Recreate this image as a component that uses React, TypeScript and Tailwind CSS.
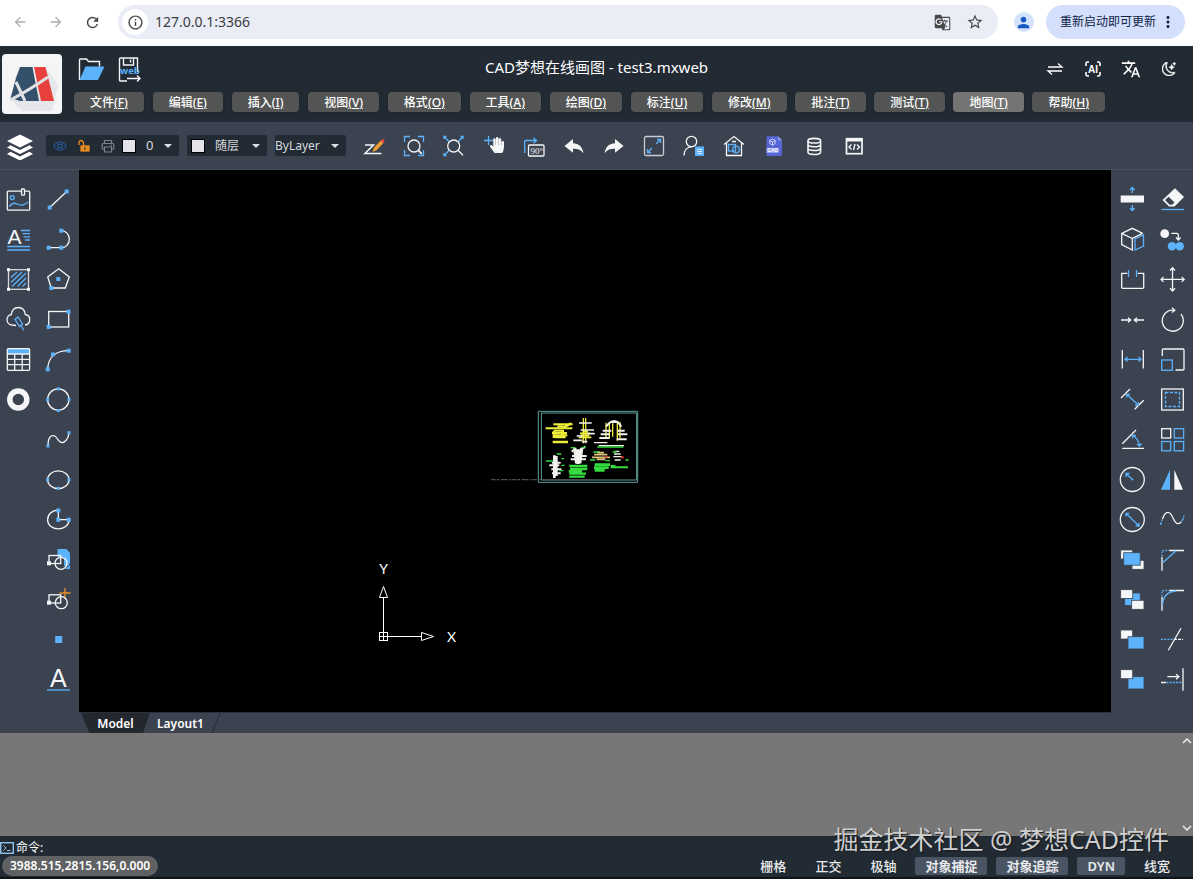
import React from 'react';
import {
  MdArrowBack,
  MdArrowForward,
  MdGTranslate,
  MdInfoOutline,
  MdMoreVert,
  MdPerson,
  MdRefresh,
  MdStarBorder,
  MdTranslate,
} from 'react-icons/md';
import { FaHandPaper } from 'react-icons/fa';
import { BsMoonStars } from 'react-icons/bs';

const BLUE = '#5cb3fb';
const WHITE = '#f4f6f8';
const PANEL = '#3c4350';

const menus = [
  { label: '文件', hotkey: 'F' },
  { label: '编辑', hotkey: 'E' },
  { label: '插入', hotkey: 'I' },
  { label: '视图', hotkey: 'V' },
  { label: '格式', hotkey: 'O' },
  { label: '工具', hotkey: 'A' },
  { label: '绘图', hotkey: 'D' },
  { label: '标注', hotkey: 'U' },
  { label: '修改', hotkey: 'M' },
  { label: '批注', hotkey: 'T' },
  { label: '测试', hotkey: 'T' },
  { label: '地图', hotkey: 'T', active: true },
  { label: '帮助', hotkey: 'H' },
];

const statusItems = [
  { label: '栅格', on: false },
  { label: '正交', on: false },
  { label: '极轴', on: false },
  { label: '对象捕捉', on: true },
  { label: '对象追踪', on: true },
  { label: 'DYN', on: true },
  { label: '线宽', on: false },
];

type Tool = { name: string; art: React.ReactNode };

function Icon({ children }: { children: React.ReactNode }) {
  return (
    <svg
      viewBox="0 0 24 24"
      className="size-6 shrink-0 overflow-visible"
      fill="none"
      stroke={WHITE}
      strokeWidth="1.3"
      aria-hidden="true"
    >
      {children}
    </svg>
  );
}

// small grip squares shown on the geometry icons
function Grips({ at, color = BLUE, size = 4 }: { at: number[][]; color?: string; size?: number }) {
  return (
    <g fill={color} stroke="none">
      {at.map(([x, y]) => (
        <rect key={`${x}-${y}`} x={x - size / 2} y={y - size / 2} width={size} height={size} />
      ))}
    </g>
  );
}

const drawTools: Tool[] = [
  {
    name: '图片',
    art: (
      <>
        <path d="M15.5 3.2H2.3a1 1 0 0 0-1 1v17a1 1 0 0 0 1 1h20.4a1 1 0 0 0 1-1v-17a1 1 0 0 0-1-1h-4" />
        <rect x="15.5" y="1" width="3" height="6.2" rx="0.8" />
        <g stroke={BLUE}>
          <circle cx="6.3" cy="9.6" r="2" />
          <path d="M3.3 18.5c2.5-3.5 5-4 8-2.5s8 2 11-2.500" />
        </g>
      </>
    ),
  },
  {
    name: '直线',
    art: (
      <>
        <path d="M4 19.3 20.7 3.5" />
        <Grips at={[[3.7, 19.5], [20.7, 3.5]]} />
      </>
    ),
  },
  {
    name: '多行文字',
    art: (
      <>
        <text x="1.5" y="16" fontSize="21" fontWeight="400" fill={WHITE} stroke="none" fontFamily="Liberation Sans, sans-serif">A</text>
        <path stroke={BLUE} d="M15 2.500h9M16.500 5.700H24M17.500 8.900H24M19 12h5M1.300 18.500H24M1.300 22H24" />
      </>
    ),
  },
  {
    name: '多段线',
    art: (
      <>
        <path d="M15.3 2.7c4.5 0 8 3.500 8 8.500s-3.500 8.500-8 8.500H2.700" />
        <Grips at={[[15.3, 2.7], [15.3, 19.7], [2.7, 19.7]]} />
      </>
    ),
  },
  {
    name: '填充',
    art: (
      <>
        <rect x="2.5" y="1.7" width="20" height="19.6" stroke="#d5d8dd" />
        <path stroke={BLUE} d="M5 9.500 11 4M5 14.500 16 4M6 18.500 20 5M11.500 18.500 20 10M16.500 18.500l3.500-3.500" />
        <Grips color={WHITE} size={3} at={[[2.5, 1.7], [22.5, 1.7], [2.5, 21.3], [22.5, 21.3]]} />
      </>
    ),
  },
  {
    name: '多边形',
    art: (
      <>
        <path d="M12.700.7 23.300 9l-4 11h-14L1.700 9Z" />
        <Grips at={[[12.3, 11], [5.3, 20]]} />
      </>
    ),
  },
  {
    name: '云线',
    art: (
      <>
        <path d="M10 17.500C8 17 7 17 6 17a5.300 5.300 0 0 1-.7-10.500C6 1.500 9-.5 12.300-.5s6.400 2 7 7A5.300 5.300 0 0 1 19 17" />
        <path stroke={BLUE} d="m9 11.500 3-2.500 4.500 7-3 2.500zM15 17.500l3 5" />
      </>
    ),
  },
  {
    name: '矩形',
    art: (
      <>
        <rect x="2.7" y="3.5" width="20" height="15.5" />
        <Grips at={[[22.5, 3.7], [2.7, 18.9]]} />
      </>
    ),
  },
  {
    name: '表格',
    art: (
      <>
        <rect x="1.5" y="0.9" width="22" height="5" fill={BLUE} stroke="none" />
        <rect x="1.3" y="0.7" width="22.3" height="21.6" rx="1" />
        <path d="M1.300 6h22.300M1.300 11.300h22.300M1.300 16.700h22.300M8.700 6v16M16.200 6v16" />
      </>
    ),
  },
  {
    name: '圆弧',
    art: (
      <>
        <path d="M1.700 21.300C2 9 10 2.700 23 2.700" />
        <Grips at={[[1.7, 21.3], [6.9, 6.5], [22.7, 2.7]]} />
      </>
    ),
  },
  { name: '圆环', art: <circle cx="12.3" cy="11.5" r="8.5" strokeWidth="5.5" /> },
  {
    name: '圆',
    art: (
      <>
        <circle cx="12.3" cy="11.5" r="10.7" />
        <Grips size={3} at={[[12.3, 0.8], [12.3, 22.5], [1.6, 11.5], [23, 11.5]]} />
      </>
    ),
  },
  { name: '', art: null },
  {
    name: '样条曲线',
    art: (
      <>
        <path d="M2 18C2 9 5 7.500 7.500 7.700c4 .3 4.500 7 8.500 7 3 0 6.500-4 7-10" />
        <Grips size={3} at={[[2, 18], [23, 4.7]]} />
      </>
    ),
  },
  { name: '', art: null },
  {
    name: '椭圆',
    art: (
      <>
        <ellipse cx="12.3" cy="11.7" rx="10.7" ry="8.9" />
        <Grips size={3} at={[[1.6, 11.7], [23, 11.7], [12.3, 20.3]]} />
      </>
    ),
  },
  { name: '', art: null },
  {
    name: '椭圆弧',
    art: (
      <>
        <path d="M12.300 2.200C6 2.200 1.600 6.500 1.600 11.700S6 20.800 12.300 20.800 23 17 23 11.700H12.300Z" />
        <Grips at={[[12.3, 2.5], [12.3, 11.7], [22.7, 11.7]]} />
      </>
    ),
  },
  { name: '', art: null },
  {
    name: '插入图块',
    art: (
      <>
        <path d="M11.500 1h9l3.500 4v10l-2 3h-4V9h-6.500zM19 21l5-4v4z" fill={BLUE} stroke="none" />
        <rect x="3" y="7.5" width="11.7" height="8" />
        <circle cx="15" cy="15.3" r="6" />
        <Grips color={WHITE} at={[[3, 15.3]]} />
      </>
    ),
  },
  { name: '', art: null },
  {
    name: '创建图块',
    art: (
      <>
        <path d="M19 0v10.500M13.500 5h11" stroke="#e8902a" />
        <rect x="3" y="6.8" width="11.7" height="8.2" />
        <circle cx="15.3" cy="14.7" r="6" />
        <Grips color={WHITE} at={[[3, 14.7]]} />
      </>
    ),
  },
  { name: '', art: null },
  { name: '点', art: <rect x="9.2" y="8" width="7" height="7" fill={BLUE} stroke="none" /> },
  { name: '', art: null },
  {
    name: '单行文字',
    art: (
      <>
        <text x="4" y="18.5" fontSize="25" fill={WHITE} stroke="none" fontFamily="Liberation Sans, sans-serif">A</text>
        <path stroke={BLUE} d="M1 22h23" />
      </>
    ),
  },
];

const modifyTools: Tool[] = [
  {
    name: '打断线',
    art: (
      <>
        <rect x="0.7" y="7.5" width="23.3" height="7" fill={WHITE} stroke="none" />
        <path stroke={BLUE} d="M12.300 5V-.5M10 2l2.300-2.500L14.600 2M12.300 17v5.500M10 20l2.300 2.500 2.300-2.500" />
      </>
    ),
  },
  {
    name: '删除',
    art: (
      <>
        <path d="M15 .3 24 9 14.500 18.500H9L2.500 12Z" fill={WHITE} stroke="none" />
        <path d="M8.700 8.700 14.500 14.500 12 16.800H9.700L5 12Z" fill={PANEL} stroke="none" />
        <path stroke={BLUE} d="M1.500 21.500H24" />
      </>
    ),
  },
  {
    name: '三维',
    art: (
      <>
        <path d="M22.700 5.300 12.300.3 1.700 5.300v11.400L12.300 22V10.500L22.700 5.300M1.700 5.300l10.600 5.200" />
        <path stroke={BLUE} d="m15 11 8.500-4v11L15 22z" />
      </>
    ),
  },
  {
    name: '复制',
    art: (
      <>
        <circle cx="4.7" cy="5.7" r="4.4" fill={WHITE} stroke="none" />
        <path d="M11.300 5.300h5.500q1.500 0 1.500 1.500V12M16 9.500l2.300 2.500 2.300-2.500" />
        <circle cx="12" cy="18.3" r="4.2" fill={BLUE} stroke="none" />
        <circle cx="19.7" cy="18.3" r="4.2" fill={BLUE} stroke="none" />
      </>
    ),
  },
  {
    name: '打断',
    art: (
      <>
        <path d="M7.300 5.300H1.700v14q0 1 1 1h20q1 0 1-1v-14h-6" />
        <path stroke={BLUE} d="M8.500 2v7M16.500 2v7" />
      </>
    ),
  },
  {
    name: '移动',
    art: <path d="M12.500-.3V23M1 11.400h23.200M10 2.500 12.500-.3 15 2.500M10 20.300l2.500 2.700 2.500-2.700M3.500 8.900 1 11.400l2.500 2.500M21.700 8.900l2.500 2.500-2.500 2.500" />,
  },
  {
    name: '合并',
    art: <path d="M1 12h9.500M8 9.700l2.700 2.300L8 14.300M24 12h-9.500M17 9.700 14.300 12l2.700 2.300" />,
  },
  {
    name: '旋转',
    art: (
      <>
        <path d="M14 2.200H12.500a10.500 10.500 0 1 0 8.500 4" />
        <path d="m12-.2 2.800 2.400L12 4.600" />
      </>
    ),
  },
  {
    name: '线性标注',
    art: (
      <>
        <path d="M2.300 2v18.500M23.300 2v18.500" />
        <path stroke={BLUE} d="M5 11.300h16M7.500 9 5 11.300l2.500 2.300M18.500 9l2.500 2.300-2.500 2.300" />
      </>
    ),
  },
  {
    name: '缩放',
    art: (
      <>
        <path d="M2.300 8V2q0-1 1-1H23q1 0 1 1v19q0 1-1 1h-7.500" />
        <rect x="1.7" y="12" width="10.6" height="10.3" stroke={BLUE} />
      </>
    ),
  },
  {
    name: '对齐标注',
    art: (
      <>
        <path d="M1 10l9-9M14.700 21.300l9-9" />
        <path stroke={BLUE} d="M6.700 6.300 18.500 17.300M6.700 9.500V6.300H10M18.500 14v3.300H15" />
      </>
    ),
  },
  {
    name: '偏移',
    art: (
      <>
        <rect x="1.7" y="1" width="21.6" height="21" />
        <rect x="5.5" y="4.5" width="14" height="14" stroke={BLUE} strokeDasharray="3 1.5" />
      </>
    ),
  },
  {
    name: '角度标注',
    art: (
      <>
        <path d="M2.300 20.300H24M2.300 15.700 16 2" />
        <path stroke={BLUE} d="M12.500 7.500q6 3 7 10.500M12.500 10.500v-3h3.500M17 16l2.500 2 2-2.500" />
      </>
    ),
  },
  {
    name: '阵列',
    art: (
      <>
        <rect x="1.7" y="0.7" width="9" height="9.3" />
        <g stroke={BLUE}>
          <rect x="14.3" y="0.7" width="9.3" height="9.3" />
          <rect x="1.7" y="13.5" width="9" height="9.3" />
          <rect x="14.3" y="13.5" width="9.3" height="9.3" />
        </g>
      </>
    ),
  },
  {
    name: '半径标注',
    art: (
      <>
        <circle cx="12.3" cy="11.5" r="12" />
        <path stroke={BLUE} d="M13.300 12.300 6 5.500M6 9V5.500h3.500" />
      </>
    ),
  },
  {
    name: '镜像',
    art: (
      <>
        <path d="M10 1.700v20H1z" fill={BLUE} stroke="none" />
        <path d="M14.300 1.700v20H23z" fill={WHITE} stroke="none" />
      </>
    ),
  },
  {
    name: '直径标注',
    art: (
      <>
        <circle cx="12.3" cy="11.5" r="12" />
        <path stroke={BLUE} d="M6 5.300 19 18M6 8.500V5.300h3.300M19 14.700V18h-3.300" />
      </>
    ),
  },
  {
    name: '拟合',
    art: (
      <>
        <path d="M2.500 11C4 6 6 4.300 8 4.300c5 0 5 11.400 10 11.400 1.500 0 2.500-.7 3.500-2" />
        <path stroke={BLUE} d="M.7 17q.5-3 1.500-5.500M22 13q1.500-2.500 2-5.500" strokeDasharray="3 1" />
      </>
    ),
  },
  {
    name: '置于中间',
    art: (
      <g stroke={PANEL} strokeWidth="0.8">
        <rect x="0.7" y="2" width="12" height="9" fill={WHITE} />
        <rect x="12" y="12.3" width="12" height="9" fill={WHITE} />
        <rect x="3.7" y="4.7" width="16.5" height="12.5" fill={BLUE} />
      </g>
    ),
  },
  {
    name: '倒角',
    art: (
      <>
        <path d="M9.300 2.500H24M2 8.700v14" />
        <path stroke={BLUE} d="M2.700 14.700 16 2.700" />
        <path stroke={BLUE} strokeDasharray="1.5 1.5" d="M2 8V2.500h7" />
      </>
    ),
  },
  {
    name: '中间层',
    art: (
      <g stroke={PANEL} strokeWidth="0.8">
        <rect x="4.7" y="5" width="15.5" height="12.5" fill={BLUE} />
        <rect x="0.7" y="1.7" width="12" height="8.7" fill={WHITE} />
        <rect x="11.7" y="12.3" width="12.3" height="9" fill={WHITE} />
      </g>
    ),
  },
  {
    name: '圆角',
    art: (
      <>
        <path d="M9.300 2.500H24M2 8.700v14" />
        <path stroke={BLUE} d="M2.500 17C3 8 8 3.500 16 3" />
        <path stroke={BLUE} strokeDasharray="1.5 1.5" d="M2 8V2.500h7" />
      </>
    ),
  },
  {
    name: '上移一层',
    art: (
      <g stroke={PANEL} strokeWidth="0.8">
        <rect x="0.7" y="2" width="12" height="9" fill={WHITE} />
        <rect x="8" y="8.7" width="16" height="12.3" fill={BLUE} />
      </g>
    ),
  },
  {
    name: '修剪',
    art: (
      <>
        <path stroke={BLUE} strokeDasharray="2 1.2" d="M1 11.300h13" />
        <path strokeDasharray="3 1" d="M14 11.300h9" />
        <path d="M8.300 22.300 21 .3" />
      </>
    ),
  },
  {
    name: '下移一层',
    art: (
      <g stroke={PANEL} strokeWidth="0.8">
        <rect x="8" y="8.7" width="16" height="12.3" fill={BLUE} />
        <rect x="0.7" y="1.7" width="12" height="9" fill={WHITE} />
      </g>
    ),
  },
  {
    name: '延伸',
    art: (
      <>
        <path d="M7.300 8.700h11.500M16 6.200l3 2.500-3 2.500M23 .3v22.500M1 14.500h5" />
        <path stroke={BLUE} strokeDasharray="2 1.2" d="M6.500 14.500H22" />
      </>
    ),
  },
];

const viewTools: Tool[] = [
  {
    name: '草图',
    art: (
      <>
        <path d="M3 11h8.500L3 19.500h16.500" strokeWidth="1.5" />
        <path d="m10.500 18 1.200-4 7-7.500 2.700 2.500-7 7.500z" fill="#f09a32" stroke="none" />
        <path d="m18.700 6.500 1.300-1.300q1-.7 1.900.2t.5 1.900L21.400 9z" fill="#e0483e" stroke="none" />
      </>
    ),
  },
  {
    name: '窗口缩放',
    art: (
      <>
        <path stroke={BLUE} d="M2.500 8V2.500H8M16 2.500h5.500V8M21.500 16v5.500H16M8 21.500H2.500V16" />
        <circle cx="12" cy="12" r="6" />
        <path d="m16.300 16.300 3.500 3.500" strokeWidth="1.8" />
      </>
    ),
  },
  {
    name: '范围缩放',
    art: (
      <>
        <path stroke={BLUE} d="M2 2.500l5.500 5.500M21 2.500 16 8M2 21.500 7.500 16M2 5V2.500h2.500M18.500 2.500H21V5M2 19v2.500h2.500" />
        <circle cx="11.7" cy="12" r="6" />
        <path d="m16 16.300 5 5" />
      </>
    ),
  },
  {
    name: '平移',
    art: (
      <>
        <path stroke={BLUE} d="M6.500 2v9M2 6.500h9" />
        <FaHandPaper x="7" y="3" width="16" height="20" color={WHITE} stroke="none" />
      </>
    ),
  },
  {
    name: '旋转视图',
    art: (
      <>
        <rect x="6.5" y="11" width="15.5" height="11" rx="1" />
        <path stroke={BLUE} d="M2.700 19V7.500q0-1 1-1H14M11.500 3.700 14.500 6.500l-3 2.800" />
        <text x="8.5" y="20" fontSize="9" fill={WHITE} stroke="none" fontFamily="Liberation Serif, serif">90°</text>
      </>
    ),
  },
  {
    name: '撤销',
    art: <path d="M2.500 12 11 5v4.200c5.500 0 9.500 3.500 10.500 10-2.500-3.700-6-4.700-10.500-4.500v4.100z" fill={WHITE} stroke="none" />,
  },
  {
    name: '重做',
    art: <path d="M21.500 12 13 5v4.200c-5.500 0-9.500 3.500-10.500 10 2.500-3.700 6-4.700 10.500-4.500v4.100z" fill={WHITE} stroke="none" />,
  },
  {
    name: '全屏',
    art: (
      <>
        <rect x="2.5" y="2.5" width="19" height="19" rx="1.5" stroke="#c9ccd2" />
        <path stroke={BLUE} d="M14 10l4.500-4.500M15 5.500h3.500V9M10 14l-4.500 4.500M5.500 15v3.500H9" />
      </>
    ),
  },
  {
    name: '用户',
    art: (
      <>
        <circle cx="9.5" cy="7.5" r="5.2" />
        <path d="M2 21.500c0-5 3-8.500 7.500-8.700" />
        <rect x="13" y="12.5" width="9" height="9.5" fill={BLUE} stroke="none" />
        <path d="M15 15.500h5M15 17.500h5M15 19.500h5" strokeWidth="0.8" />
      </>
    ),
  },
  {
    name: '图库',
    art: (
      <>
        <path d="M2 10.500 12 2.500l10 8M4.500 9v12.500h15V9M10 7.500h4" />
        <g stroke={BLUE}>
          <rect x="6.5" y="10.5" width="7" height="6.5" />
          <circle cx="14" cy="15.5" r="3.3" />
        </g>
      </>
    ),
  },
  {
    name: 'CAD 文件',
    art: (
      <>
        <path d="M6 2.300h10l4 4V20.500q0 1.500-1.500 1.500H6q-1.500 0-1.500-1.500v-17q0-1.200 1.500-1.200z" fill="#5766d6" stroke="none" />
        <path d="M16 2.300v4h4z" fill="#8f9bea" stroke="none" />
        <path d="m10.500 5 2.700 1.500v3L10.500 11l-2.700-1.500v-3zM7.800 6.500l2.700 1.500 2.700-1.500M10.500 8v3" strokeWidth="0.7" />
        <rect x="4.5" y="14" width="12" height="5" fill="#98a3ef" stroke="none" />
        <text x="5.5" y="18.2" fontSize="5" fontWeight="700" fill="#fff" stroke="none" fontFamily="Liberation Sans, sans-serif">CAD</text>
      </>
    ),
  },
  {
    name: '数据库',
    art: (
      <g strokeWidth="1.6">
        <ellipse cx="12.3" cy="6.7" rx="6.3" ry="2.3" />
        <path d="M6 6.700v11.500c0 3 12.600 3 12.600 0V6.700M6 10.500c0 3 12.600 3 12.600 0M6 14.300c0 3 12.600 3 12.600 0" />
      </g>
    ),
  },
  {
    name: '代码',
    art: (
      <>
        <rect x="4.5" y="4.7" width="15.5" height="15" strokeWidth="1.7" />
        <path d="M4 6h16.500" strokeWidth="3" />
        <path d="m9.500 10.500-2.500 2.500 2.500 2.500M15 10.500l2.500 2.500-2.500 2.500M13 10l-1.500 6" strokeWidth="1.4" />
      </>
    ),
  },
];

function ToolGrid({ tools, label }: { tools: Tool[]; label: string }) {
  return (
    <div role="toolbar" aria-label={label} className="grid grid-cols-[36px_36px] gap-1 content-start pt-3">
      {tools.map((tool, i) =>
        tool.art ? (
          <button key={i} type="button" title={tool.name} className="flex items-center justify-center h-9">
            <Icon>{tool.art}</Icon>
          </button>
        ) : (
          <span key={i} className="h-9" />
        )
      )}
    </div>
  );
}

function BrowserBar() {
  return (
    <div className="flex items-center h-[46px] bg-white pb-0.5 text-[#474747]">
      <div className="flex items-center gap-5 pl-3">
        <button type="button" title="后退" className="text-[#a9abae]"><MdArrowBack size={16} /></button>
        <button type="button" title="前进" className="text-[#a9abae]"><MdArrowForward size={16} /></button>
        <button type="button" title="刷新"><MdRefresh size={17} /></button>
      </div>
      <div className="flex items-center flex-1 h-[34px] ml-[17px] pl-1 pr-[14px] rounded-full bg-[#eaedf6]">
        <span className="flex items-center justify-center size-[26px] rounded-full bg-white">
          <MdInfoOutline size={17} />
        </span>
        <input
          aria-label="地址"
          defaultValue="127.0.0.1:3366"
          className="flex-1 min-w-0 ml-[7px] bg-transparent text-sm text-[#3a3b3f] outline-none"
        />
        <button type="button" title="翻译"><MdGTranslate size={17} /></button>
        <button type="button" title="收藏" className="ml-[15px]"><MdStarBorder size={18} /></button>
      </div>
      <button type="button" title="用户" className="flex items-center justify-center size-5 ml-4 rounded-full bg-[#d3e3fd] text-[#1659c5]">
        <MdPerson size={17} />
      </button>
      <button type="button" className="flex items-center h-[34px] ml-3 mr-2 pl-[14px] pr-2 gap-[3px] rounded-full bg-[#d4e0fb] text-xs text-[#102347]">
        重新启动即可更新
        <MdMoreVert size={18} />
      </button>
    </div>
  );
}

function Logo() {
  return (
    <svg viewBox="0 0 60 60" className="row-span-2 size-[60px] ml-0.5" aria-label="梦想CAD">
      <rect width="60" height="60" rx="4" fill="#f5f5f6" />
      <path d="M8 45 20 57h30l6-26L44 14 32 30z" fill="#e6e7ea" />
      <path d="M18 13h12.500l6.500 34H18l-6-2L8 46l5.500-20z" fill="#35506b" />
      <path d="M32 13h11.500L52 47H39z" fill="#e8403d" />
      <path d="M13.500 25 18 13l-4 12z" fill="#35506b" />
      <path d="M8 46Q26 37 46 23M14 28l9 19" stroke="#dfe1e5" strokeWidth="3" fill="none" />
    </svg>
  );
}

function Header() {
  return (
    <header className="grid grid-cols-[74px_minmax(0,1fr)_auto_minmax(0,1fr)_74px] grid-rows-[38px_22px] items-start pt-2 pb-2 bg-[#222a33] text-white">
      <Logo />
      <div className="flex items-center gap-3 h-8 pl-1">
        <button type="button" title="打开">
          <svg viewBox="0 0 28 26" className="w-7 h-[26px]" fill="none" aria-hidden="true">
            <path d="M1.500 23V3q0-1 1-1h6l2 2.500h11v5" stroke="#f4f6f8" strokeWidth="1.4" />
            <path d="M7.500 9.500H26.500L20 23H1.500z" fill={BLUE} />
          </svg>
        </button>
        <button type="button" title="保存">
          <svg viewBox="0 0 24 26" className="w-6 h-[26px]" fill="none" stroke="#f4f6f8" strokeWidth="1.4" aria-hidden="true">
            <path d="M9 24H2.500q-1 0-1-1V2q0-1 1-1h17v14M5.500 1v7h10V1M12.500 2.500v3" />
            <path d="M9 21.500h13M19 18.500l3 3-3 3" />
            <text x="2" y="16.5" fontSize="9.5" fontWeight="700" fill={BLUE} stroke="none" fontFamily="Open Sans, sans-serif">web</text>
          </svg>
        </button>
      </div>
      <h1 className="h-[30px] leading-[26px] text-[15px]">CAD梦想在线画图 - test3.mxweb</h1>
      <div className="col-span-2 flex items-center justify-end gap-[18px] h-[30px] pr-[14px]">
        <button type="button" title="切换">
          <svg viewBox="0 0 20 20" className="size-5" fill="none" stroke="currentColor" strokeWidth="1.3" aria-hidden="true">
            <path d="M3 8h14l-4-3.500M17 12H3l4 3.500" />
          </svg>
        </button>
        <button type="button" title="AI">
          <svg viewBox="0 0 20 20" className="size-5" fill="none" stroke="currentColor" strokeWidth="1.6" aria-hidden="true">
            <path d="M6 3H4.500Q3 3 3 4.500V7M14 3h1.500Q17 3 17 4.500V7M17 13v2.500q0 1.500-1.500 1.500H14M6 17H4.500Q3 17 3 15.500V13" />
            <text x="5" y="13.7" fontSize="10" fontWeight="700" fill="currentColor" stroke="none" fontFamily="Liberation Sans, sans-serif">AI</text>
          </svg>
        </button>
        <button type="button" title="语言"><MdTranslate size={20} /></button>
        <button type="button" title="主题" className="p-[3px]"><BsMoonStars size={14} strokeWidth={0.6} /></button>
      </div>
      <nav className="col-span-4 flex justify-between gap-2 max-w-[1031px]">
        {menus.map((menu) => (
          <button
            key={menu.label}
            type="button"
            className={
              menu.active
                ? 'h-5 px-4 rounded bg-[#747573] text-xs leading-[22px] font-medium whitespace-nowrap shadow-sm'
                : 'h-5 px-4 rounded bg-[#535554] text-xs leading-[22px] font-medium whitespace-nowrap shadow-sm'
            }
          >
            {menu.label}<u>({menu.hotkey})</u>
          </button>
        ))}
      </nav>
    </header>
  );
}

function Caret() {
  return (
    <svg viewBox="0 0 8 4" className="w-2 h-1 shrink-0" fill="#dfe1e4" aria-hidden="true">
      <path d="M0 0h8L4 4z" />
    </svg>
  );
}

function Toolbar() {
  return (
    <div className="flex items-center h-12 pl-[6px] bg-[#3c4350] border-b border-[#4a505c] text-[#d7dade]">
      <button type="button" title="图层">
        <svg viewBox="0 0 28 28" className="size-7" fill="#fff" aria-hidden="true">
          <path d="m14 2.500 13 6.500-13 6.500L1 9z" />
          <path d="m4.500 13.300 9.500 4.700 9.500-4.700L27 15.500l-13 6.500L1 15.500zM4.500 19.800l9.500 4.700 9.500-4.700L27 22l-13 6.500L1 22z" />
        </svg>
      </button>
      <div className="flex items-center w-[133px] h-[21px] ml-3 pl-[7px] pr-[7px] bg-[#222a33] rounded-xs">
        <svg viewBox="0 0 14 14" className="size-[14px]" fill="none" stroke="#27599c" strokeWidth="1.2" aria-hidden="true">
          <path d="M.5 7Q7-1.500 13.500 7 7 15.500.5 7z" />
          <circle cx="7" cy="7" r="2.2" />
        </svg>
        <svg viewBox="0 0 14 14" className="size-[14px] ml-[10px]" fill="none" stroke="#e48b1f" strokeWidth="1.3" aria-hidden="true">
          <path d="M2 6V4q0-2.500 2-2.500T6.500 4v3" />
          <rect x="4" y="7" width="8" height="5" fill="#e48b1f" />
          <path d="M8 8.500v2" stroke="#222a33" />
        </svg>
        <svg viewBox="0 0 14 14" className="size-[14px] ml-[10px]" fill="none" stroke="#7d8288" strokeWidth="1.2" aria-hidden="true">
          <path d="M3.500 4V1.500h7V4M3.500 10H1.200V5.500q0-1 1-1h9.600q1 0 1 1V10h-2.300" />
          <path d="M3.500 8h7v5h-7zM9.500 6.300h1.500" />
        </svg>
        <span className="size-[14px] ml-[7px] border border-black bg-[#e3e4ea]" />
        <select aria-label="当前图层" className="flex-1 min-w-0 ml-[10px] appearance-none bg-transparent text-[13px] outline-none">
          <option>0</option>
        </select>
        <Caret />
      </div>
      <div className="flex items-center w-20 h-[21px] ml-2 pl-1 pr-[7px] bg-[#222a33] rounded-xs">
        <span className="size-[14px] border border-black bg-[#e3e4ea]" />
        <select aria-label="颜色" className="flex-1 min-w-0 ml-[10px] appearance-none bg-transparent text-xs outline-none">
          <option>随层</option>
        </select>
        <Caret />
      </div>
      <div className="flex items-center w-[71px] h-[21px] ml-2 pr-[7px] bg-[#222a33] rounded-xs">
        <select aria-label="线型" className="flex-1 min-w-0 appearance-none bg-transparent text-xs outline-none">
          <option>ByLayer</option>
        </select>
        <Caret />
      </div>
      <div role="toolbar" aria-label="视图工具" className="flex gap-4 ml-4">
        {viewTools.map((tool) => (
          <button key={tool.name} type="button" title={tool.name}>
            <Icon>{tool.art}</Icon>
          </button>
        ))}
      </div>
    </div>
  );
}

function Drawing() {
  return (
    <svg x="401" y="230" width="170" height="95" viewBox="0 0 510 285" fill="none">
      <g stroke="#5f9f9a" strokeWidth="3">
        <path d="M175 34h298v213H175z" />
        <path d="M184 39h286v201H184z" />
      </g>
      <path d="M33 239h305" stroke="#4c4c4c" strokeWidth="4" strokeDasharray="14 3 8 5 20 4 5 3" />
      <g stroke="#eded3a">
        <path d="M220 73h58M197 85h80M222 92h28M216 99h45M220 106h42M225 112h32" strokeWidth="6" />
        <path d="M218 126h46M232 79h18M250 82l24-12" strokeWidth="7" />
        <path d="M222 92v22M248 90v20" strokeWidth="8" />
        <path d="M310 54v76M317 54v76" strokeWidth="4" />
        <path d="M300 100h30M296 112h38M308 94h16M302 106h26" strokeWidth="5" />
        <path d="M378 68v46M388 66v50M420 66v48M412 66v56M398 70v40" strokeWidth="4" />
      </g>
      <g stroke="#f2f2ee">
        <path d="M297 69h38M302 90h40M290 108h18M280 121h26M322 101h22M306 125h16" strokeWidth="5" />
        <path d="M378 80q26-34 46 0M390 66h26M368 92h26M412 92h22M362 103h28M414 103h28M358 114h30M410 118h30" strokeWidth="6" />
        <path d="M342 128h40M356 137h76" strokeWidth="4" />
        <path d="M275 155l12-10M300 150l16-10M276 168h44M272 178h46" strokeWidth="6" />
        <path d="M284 144l6 46M294 148v44M305 144l-6 46" strokeWidth="10" />
        <path d="M223 166v68M229 168v60" strokeWidth="8" />
        <path d="M216 188h26M208 196h30M214 208h30M216 220h26" strokeWidth="6" />
        <path d="M404 154h14M402 162h20M400 170h26M404 180h18" strokeWidth="4" />
      </g>
      <g stroke="#35dc3f">
        <path d="M268 198h54M270 207h52M266 214h40M268 221h50M268 230h46" strokeWidth="7" />
        <path d="M344 194h46M342 203h44M344 211h30" strokeWidth="8" />
        <path d="M392 202h52M392 198h14" strokeWidth="6" />
        <path d="M330 180h16M376 182h14M340 156h20M398 156h12M436 180h10M352 141h78" strokeWidth="4" />
        <path d="M198 183h22M230 162h14M244 176h8M244 196h10M238 212h12M272 143h14M304 143h14" strokeWidth="4" />
      </g>
      <path d="M342 164h40M336 172h54M352 158h20M350 178h26" stroke="#d9c27a" strokeWidth="5" />
      <path d="M374 171h8M422 172h10" stroke="#e0302c" strokeWidth="5" />
    </svg>
  );
}

function UcsAxes() {
  return (
    <g stroke="#fff" fill="none" strokeWidth="1" shapeRendering="crispEdges">
      <path d="M300.500 462.500h8v8h-8zM304.500 471v-43M300 466.500h43" />
      <path d="M300.500 427.500h8l-4-11zM342.500 462.500v8l12-4z" shapeRendering="auto" />
      <g fill="#fff" stroke="none" fontSize="14" fontFamily="Lato, sans-serif" textAnchor="middle">
        <text x="304.5" y="404">Y</text>
        <text x="372.5" y="472">X</text>
      </g>
    </g>
  );
}

function Workspace() {
  return (
    <main className="flex flex-1 bg-[#3c4350]">
      <div className="w-[79px] shrink-0">
        <ToolGrid tools={drawTools} label="绘图工具" />
      </div>
      <div className="flex flex-col flex-1 min-w-0">
        <div className="flex flex-1 bg-black">
          <svg className="flex-1 w-full h-full min-w-0" aria-label="图纸">
            <Drawing />
            <UcsAxes />
          </svg>
        </div>
        <div className="flex h-[21px] pl-0.5 border-t border-[#2b313b] text-xs leading-[22px] font-semibold text-white">
          <button type="button" className="w-[69px] h-5 bg-[#23282f] [clip-path:polygon(0_0,100%_0,90%_100%,12%_100%)]">
            Model
          </button>
          <button type="button" className="w-[61px] h-5">Layout1</button>
          <svg viewBox="0 0 10 20" className="w-[10px] h-5" fill="none" stroke="#272c34" aria-hidden="true">
            <path d="M9 0 1 20" />
          </svg>
        </div>
      </div>
      <div className="w-[82px] shrink-0 pl-[3px]">
        <ToolGrid tools={modifyTools} label="修改工具" />
      </div>
    </main>
  );
}

function CommandPanel() {
  return (
    <>
      <div className="flex flex-col items-end justify-between h-[103px] py-1 bg-[#777777]">
        <button type="button" title="向上">
          <svg viewBox="0 0 12 8" className="w-3 h-2" fill="none" stroke="#f0f0f0" strokeWidth="1.5" aria-hidden="true">
            <path d="m2 6 4-4 4 4" />
          </svg>
        </button>
        <button type="button" title="向下">
          <svg viewBox="0 0 12 8" className="w-3 h-2" fill="none" stroke="#f0f0f0" strokeWidth="1.5" aria-hidden="true">
            <path d="m2 2 4 4 4-4" />
          </svg>
        </button>
      </div>
      <div className="flex items-center h-5 pt-1 bg-[#222a33] text-xs text-white">
        <svg viewBox="0 0 14 12" className="w-[14px] h-3" fill="none" stroke="#8fc3ea" aria-hidden="true">
          <rect x="0.7" y="0.7" width="12.6" height="10.6" strokeWidth="1.4" />
          <path d="m3.500 3.500 2.500 2.500-2.500 2.500M7 8.500h3.500" />
        </svg>
        <label htmlFor="command" className="ml-0.5">命令:</label>
        <input id="command" className="flex-1 min-w-0 ml-1 bg-transparent outline-none" />
      </div>
    </>
  );
}

function StatusBar() {
  return (
    <footer className="flex items-center justify-between h-[23px] pl-0.5 pr-[13px] pb-px bg-[#222a33] border-b-2 border-[#101317] text-[#e8eaec]">
      <span className="h-5 px-2 rounded-full bg-[#5f6163] text-xs leading-5 font-semibold text-white">
        3988.515,2815.156,0.000
      </span>
      <div className="flex gap-[9px]">
        {statusItems.map((item) => (
          <button
            key={item.label}
            type="button"
            aria-pressed={item.on}
            className={
              item.on
                ? 'h-[18px] px-[10px] rounded-xs bg-[#4a5564] text-[13px] leading-[18px] font-semibold'
                : 'h-[18px] px-[10px] rounded-xs text-[13px] leading-[18px] font-medium'
            }
          >
            {item.label}
          </button>
        ))}
      </div>
    </footer>
  );
}

export default function App() {
  return (
    <div className="relative flex flex-col min-h-screen bg-[#222a33] font-['Noto_Sans','Noto_Sans_CJK_SC',sans-serif]">
      <BrowserBar />
      <Header />
      <Toolbar />
      <Workspace />
      <CommandPanel />
      <StatusBar />
      <div className="absolute right-6 bottom-[22px] text-[25px] leading-9 text-[#cdcfd1] pointer-events-none [text-shadow:1px_1px_1px_#1a1a1a]">
        掘金技术社区 @ 梦想CAD控件
      </div>
    </div>
  );
}
